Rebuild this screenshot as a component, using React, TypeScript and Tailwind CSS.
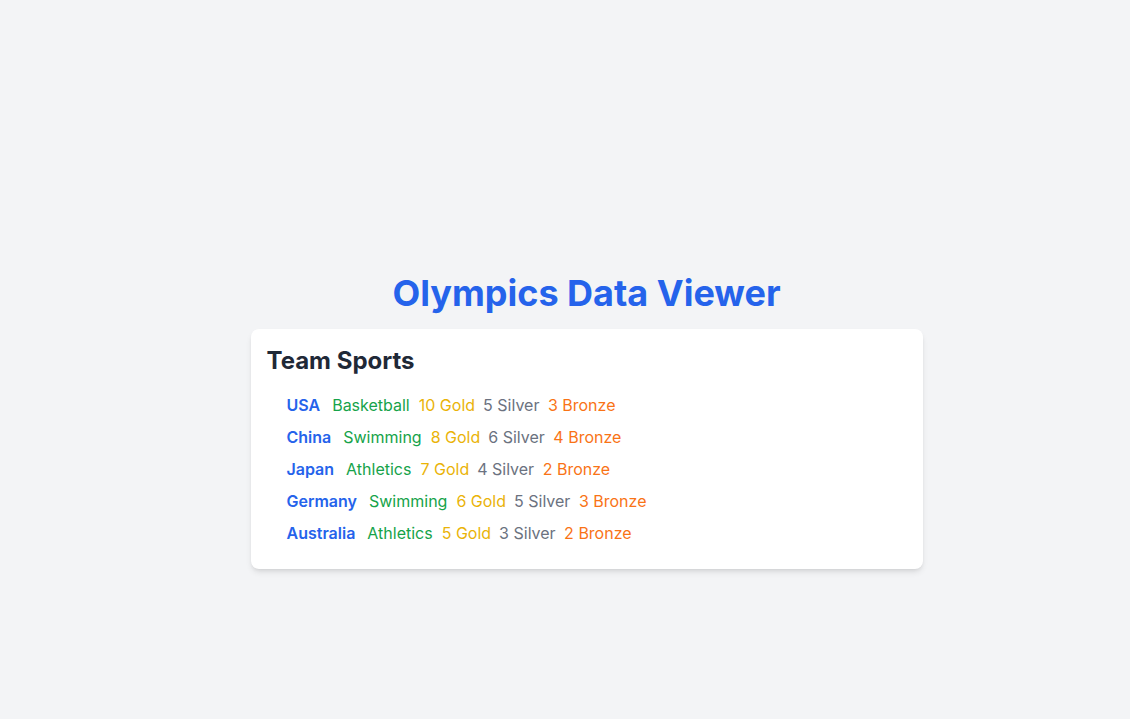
const rows = [
  { country: 'USA', sport: 'Basketball', gold: 10, silver: 5, bronze: 3 },
  { country: 'China', sport: 'Swimming', gold: 8, silver: 6, bronze: 4 },
  { country: 'Japan', sport: 'Athletics', gold: 7, silver: 4, bronze: 2 },
  { country: 'Germany', sport: 'Swimming', gold: 6, silver: 5, bronze: 3 },
  { country: 'Australia', sport: 'Athletics', gold: 5, silver: 3, bronze: 2 },
];

export default function App() {
  return (
    <div
      className="min-h-screen bg-[#f3f4f6] flex flex-col items-center pt-[273px] pl-[43px]"
      style={{ fontFamily: 'Inter, "Noto Sans", sans-serif' }}
    >
      <h1 className="text-4xl font-bold text-[#2563eb] mb-4">Olympics Data Viewer</h1>
      <div className="w-full max-w-2xl bg-white rounded-lg shadow-md px-4 pt-4 pb-6">
        <h2 className="text-2xl font-bold text-[#1f2937] mb-4">Team Sports</h2>
        <ul className="pl-5 space-y-2">
          {rows.map((r) => (
            <li key={r.country} className="text-base flex">
              <span className="font-semibold text-[#2563eb] mr-3">{r.country}</span>
              <span className="text-[#16a34a] mr-[9px]">{r.sport}</span>
              <span className="text-[#eab308] mr-2">{r.gold} Gold</span>
              <span className="text-[#6b7280] mr-[8.5px]">{r.silver} Silver</span>
              <span className="text-[#f97316]">{r.bronze} Bronze</span>
            </li>
          ))}
        </ul>
      </div>
    </div>
  );
}
